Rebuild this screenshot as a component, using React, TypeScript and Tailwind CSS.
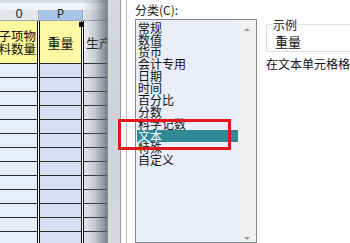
import React from 'react';

const categories = [
  '常规',
  '数值',
  '货币',
  '会计专用',
  '日期',
  '时间',
  '百分比',
  '分数',
  '科学记数',
  '文本',
  '特殊',
  '自定义',
];

const SELECTED = '文本';
const DATA_ROWS = 13;

const Separator: React.FC = () => (
  <div className="w-[3px] shrink-0 border-x border-[#111] bg-white" />
);

const SheetColumn: React.FC<{
  width: string;
  headBg: string;
  dataBg: string;
  children: React.ReactNode;
}> = ({ width, headBg, dataBg, children }) => (
  <div className={`${width} flex flex-col shrink-0`}>
    <div className={`h-[43px] border-b border-[#222] ${headBg} overflow-hidden`}>{children}</div>
    {Array.from({ length: DATA_ROWS }).map((_, i) => (
      <div key={i} className={`h-[14px] border-b border-[#2b2b2b] ${dataBg}`} />
    ))}
  </div>
);

const Sheet: React.FC = () => (
  <div className="relative w-[107px] h-full shrink-0 overflow-hidden font-['Noto_Sans_CJK_SC',sans-serif]">
    <div className="h-[10px] bg-[#f3f4f6] border-t-[3px] border-[#d9dde2]" />
    <div className="flex h-[11px] border-b border-[#9aa7b6] font-['Liberation_Mono',monospace] text-[12px] leading-[10px] text-[#2d2d2d]">
      <div className="w-[39px] shrink-0 bg-[#e3e7ec] border-r border-[#a9b5c2] flex items-center justify-center">O</div>
      <div className="w-[44px] shrink-0 bg-[#a9c4e6] border-r border-[#8ea6c4] flex items-center justify-center">P</div>
      <div className="flex-1 bg-[#e3e7ec]" />
    </div>
    <div className="relative flex">
      <SheetColumn width="w-[37px]" headBg="bg-[#fdf99c]" dataBg="bg-[#e7edf9]">
        <div className="h-full flex flex-col items-end justify-center text-[12.5px] leading-[13px] text-[#111] whitespace-nowrap pr-[1px]">
          <span>子项物</span>
          <span>料数量</span>
        </div>
      </SheetColumn>
      <Separator />
      <SheetColumn width="w-[41px]" headBg="bg-[#fcf8a4]" dataBg="bg-[#d9e0f3]">
        <div className="h-full flex items-center justify-center text-[13px] text-[#111] pt-[1px]">重量</div>
      </SheetColumn>
      <Separator />
      <div className="flex-1 flex flex-col min-w-0">
        <div className="h-[43px] border-b border-[#222] bg-[#eef0f4] flex items-center pl-[2px] text-[13px] text-[#111] whitespace-nowrap pt-[1px]">生产</div>
        {Array.from({ length: DATA_ROWS }).map((_, i) => (
          <div key={i} className="h-[14px] border-b border-[#2b2b2b] bg-[#e4e9f3]" />
        ))}
      </div>
      <div className="absolute left-[79px] top-[1px] w-[5px] h-[5px] bg-[#111]" />
    </div>
    {/* dialog shadow falling on the sheet */}
    <div className="absolute right-0 top-0 bottom-0 w-[24px] bg-gradient-to-r from-[rgba(120,125,135,0)] via-[rgba(115,120,130,0.3)] to-[rgba(90,95,105,0.75)]" />
  </div>
);

const CategoryList: React.FC = () => (
  <div className="w-[122px] shrink-0 flex flex-col">
    <div className="h-[19px] pt-[3px] text-[12px] leading-[13px] text-[#1a1a1a] whitespace-nowrap">
      分类(C):
    </div>
    <div className="flex-1 flex border border-[#828790] bg-[#e9eef9]">
      <div className="w-[102px] pl-[1px] pt-[2px] text-[12px] leading-[12px] text-[#111]">
        {categories.map((c) => (
          <div
            key={c}
            className={
              c === SELECTED
                ? 'h-[12px] pl-[1px] bg-[#2f8a95] text-white whitespace-nowrap'
                : 'h-[12px] pl-[1px] whitespace-nowrap'
            }
          >
            {c}
          </div>
        ))}
      </div>
      <div className="w-[18px] shrink-0 bg-[#f0f0f0] flex flex-col items-center justify-between pt-[8px] pb-[2px]">
        <div className="w-0 h-0 border-x-[3px] border-x-transparent border-b-[3px] border-b-[#9a9a9a]" />
        <div className="w-0 h-0 border-x-[3px] border-x-transparent border-t-[3px] border-t-[#9a9a9a]" />
      </div>
    </div>
  </div>
);

const SamplePanel: React.FC = () => (
  <div className="flex-1 min-w-0 ml-[9px] pt-[18px] overflow-hidden">
    <fieldset className="h-[34px] border border-[#d5dfe5] border-r-0 rounded-tl-[3px] rounded-bl-[3px] px-[5px]">
      <legend className="px-[1px] text-[12px] leading-[13px] text-[#1a1a1a]">示例</legend>
      <div className="pl-[3px] pt-[4px] text-[13px] leading-[14px] text-[#111]">重量</div>
    </fieldset>
    <div className="mt-[5px] text-[12px] leading-[13px] text-[#111] whitespace-nowrap">
      在文本单元格格式中，数字作为文本处理。
    </div>
  </div>
);

export default function App() {
  return (
    <div className="relative w-[350px] h-[243px] flex overflow-hidden bg-white">
      <Sheet />
      {/* dialog frame */}
      <div className="w-[14px] shrink-0 border-l border-[#868a90] border-r border-r-[#9a9ea4] bg-gradient-to-b from-[#d7d9dc] via-[#cfd2d6] to-[#d7d9dc]" />
      <div className="flex-1 flex bg-white font-['Noto_Sans_CJK_SC',sans-serif]">
        <div className="ml-[5px] border-l border-[#b9bcc0] pl-[8px] flex flex-1 min-w-0">
          <CategoryList />
          <SamplePanel />
        </div>
      </div>
      {/* red annotation box */}
      <div className="absolute left-[118px] top-[119px] w-[113px] h-[31px] border-[3px] border-[#e3161e]" />
    </div>
  );
}
